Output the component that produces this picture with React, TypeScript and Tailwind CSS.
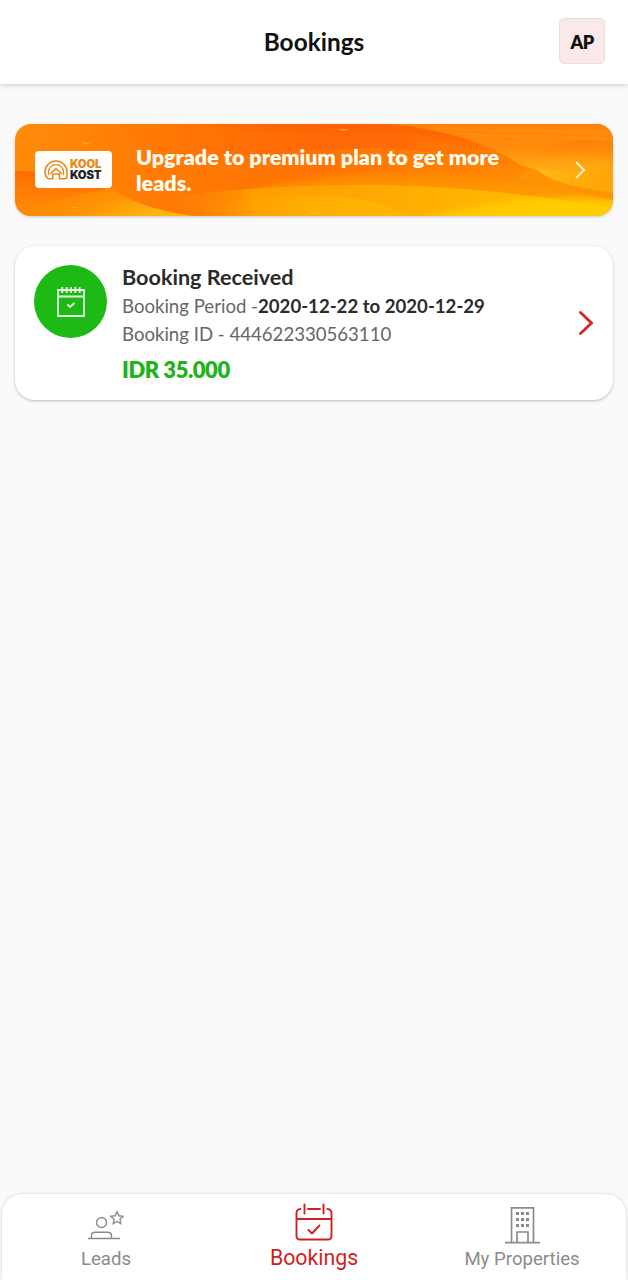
import type { ReactNode } from 'react'

function BannerArt() {
  return (
    <svg className="absolute inset-0 h-full w-full" viewBox="0 0 598 92" preserveAspectRatio="none" aria-hidden="true">
      <defs>
        <linearGradient id="base" x1="0" y1="0" x2="1" y2="0">
          <stop offset="0" stopColor="#ff8b08" />
          <stop offset="0.25" stopColor="#ff7a06" />
          <stop offset="0.5" stopColor="#ff7303" />
          <stop offset="0.75" stopColor="#ff8205" />
          <stop offset="1" stopColor="#ff9a08" />
        </linearGradient>
        <linearGradient id="top" x1="0" y1="0" x2="1" y2="0">
          <stop offset="0" stopColor="#ff7c05" />
          <stop offset="0.5" stopColor="#ff6806" />
          <stop offset="0.75" stopColor="#ff6c06" />
          <stop offset="1" stopColor="#ff8a05" />
        </linearGradient>
        <linearGradient id="ember" x1="0" y1="0" x2="0" y2="1">
          <stop offset="0" stopColor="#ff6a02" />
          <stop offset="1" stopColor="#ff7d02" stopOpacity="0" />
        </linearGradient>
        <linearGradient id="leftGlow" x1="0" y1="0" x2="1" y2="0.4">
          <stop offset="0" stopColor="#ff7a02" />
          <stop offset="0.6" stopColor="#ff9304" />
          <stop offset="1" stopColor="#ffb60c" />
        </linearGradient>
        <linearGradient id="middle" x1="0" y1="0" x2="0" y2="1">
          <stop offset="0" stopColor="#ff8e02" />
          <stop offset="1" stopColor="#ffab01" />
        </linearGradient>
        <linearGradient id="yellow" x1="0" y1="0" x2="1" y2="0">
          <stop offset="0" stopColor="#ff8a02" stopOpacity="0" />
          <stop offset="0.2" stopColor="#ffa002" />
          <stop offset="0.6" stopColor="#ffb402" />
          <stop offset="1" stopColor="#ffcc02" />
        </linearGradient>
        <linearGradient id="gold" x1="0" y1="0" x2="1" y2="0">
          <stop offset="0" stopColor="#ffa002" stopOpacity="0" />
          <stop offset="0.5" stopColor="#ffb002" />
          <stop offset="1" stopColor="#ffb802" />
        </linearGradient>
        <linearGradient id="corner" x1="0" y1="0" x2="0" y2="1">
          <stop offset="0" stopColor="#ff820a" />
          <stop offset="0.5" stopColor="#ff8c0b" />
          <stop offset="1" stopColor="#ffad14" />
        </linearGradient>
        <linearGradient id="shade" x1="0" y1="0" x2="0" y2="1">
          <stop offset="0" stopColor="#ff7d08" stopOpacity="0.8" />
          <stop offset="1" stopColor="#ff8a08" stopOpacity="0" />
        </linearGradient>
        <linearGradient id="lens" x1="0" y1="0" x2="1" y2="0.2">
          <stop offset="0" stopColor="#ffbd16" />
          <stop offset="0.6" stopColor="#ffac0c" />
          <stop offset="1" stopColor="#ffa608" />
        </linearGradient>
        <filter id="soft" x="-10%" y="-20%" width="120%" height="140%">
          <feGaussianBlur stdDeviation="3" />
        </filter>
      </defs>
      <rect width="598" height="92" fill="url(#base)" />
      <path d="M105 0C116 14 132 25 160 31C230 39 300 20 380 25C440 29 480 38 525 46C500 30 450 6 376 0Z" fill="url(#top)" />
      <path d="M180 -4C240 8 300 10 380 8C430 10 450 20 470 24C450 8 420 -2 376 -4Z" fill="#ff5f05" opacity=".55" filter="url(#soft)" />
      <path d="M0 47C50 49 80 47 95 64C118 79 140 86 178 92H0Z" fill="url(#ember)" />
      <path d="M0 92V84C30 80 60 71 95 64C118 79 140 86 178 92Z" fill="url(#leftGlow)" />
      <path d="M376 0C433 6 480 22 500 38C506 42 515 45 525 46C550 48 575 45 598 41V0Z" fill="url(#corner)" />
      <path d="M400 14C440 20 470 26 512 46C480 42 440 38 400 38Z" fill="#ff7c05" opacity=".6" filter="url(#soft)" />
      <path d="M520 34C532 17 560 14 598 18V38C570 30 545 32 520 34Z" fill="url(#shade)" />
      <path d="M420 4C480 8 540 6 598 9M440 9C500 15 550 12 598 15" stroke="#ffa31b" strokeWidth="1" fill="none" opacity=".45" />
      <path d="M230 68C280 54 340 47 393 49C450 50 518 58 598 76V100H240Z" fill="url(#middle)" opacity=".75" filter="url(#soft)" />
      <path d="M393 49C450 50 518 58 598 76V92H393Z" fill="url(#middle)" opacity=".4" filter="url(#soft)" />
      <path d="M150 74C220 64 300 60 376 61C450 63 530 72 598 84V92H178Z" fill="url(#yellow)" opacity=".85" />
      <path d="M190 82C240 72 315 70 343 75C368 80 382 86 393 92H190Z" fill="url(#gold)" opacity=".85" />
      <path d="M400 96C470 78 545 70 608 76V96Z" fill="#ffd002" opacity=".8" filter="url(#soft)" />
      <path d="M520 44C545 49 573 46 598 41V69C567 64 537 60 520 44Z" fill="url(#lens)" />
      <path d="M518 44C537 60 567 64 598 69V76C570 70 545 62 500 56Z" fill="#ff9304" />
      <path d="M66 18L76 19L70 20.5ZM322 5L334 5L329 7ZM293 87L306 89L296 90.5ZM56 83L62 83L60 84.5Z" fill="#ffb43b" opacity=".8" />
    </svg>
  )
}

function Logo() {
  return (
    <div className="mb-px flex h-[37px] w-[77px] shrink-0 items-center rounded-[4px] bg-[#fffefb] pl-[9px]">
      <svg className="h-5 w-6 shrink-0" viewBox="0 0 24 20" fill="none" stroke="#e58a22" strokeWidth="1.6" strokeLinecap="round" strokeLinejoin="round">
        <path d="M4 18.5C2 16.8 1 14.7 1 12.2C1 5.8 5.8 1 12 1S23 5.8 23 12.2V16.5C23 18 22 18.8 20.5 18.8H15.5V14H8.8V18.8H5" />
        <path d="M4.5 14.5V12C4.5 7.8 7.8 4.6 12 4.6S19.5 7.8 19.5 12V14.5" strokeWidth="1.3" />
        <path d="M6.5 13.5L12 8.6L17.5 13.5" />
      </svg>
      <div className="ml-[2px] font-['Inter',sans-serif] text-[11.3px] leading-[10.5px] font-black tracking-[-0.2px]">
        <div className="text-[#e58a22]">KOOL</div>
        <div className="text-[#20242a]">KOST</div>
      </div>
    </div>
  )
}

function CalendarIcon() {
  return (
    <svg className="h-8 w-7" viewBox="0 0 28 32" fill="none" stroke="#e8fbe6" strokeWidth="1.8">
      <path d="M1 4H27V30H1ZM1 10.5H27" />
      <path d="M5.3 1V7M9.7 1V7M14 1V7M18.3 1V7M22.7 1V7" />
      <path d="M10.5 18.5L13 21L17.5 17" />
    </svg>
  )
}

function NavItem({ label, active, children }: { label: string; active?: boolean; children: ReactNode }) {
  return (
    <button className={active ? 'flex w-[208px] flex-col items-center text-[#cf1f1f]' : 'flex w-[208px] flex-col items-center text-[#8b8b8b]'}>
      <span className="flex h-[42px] items-center">{children}</span>
      <span className={active ? 'mt-px text-[21.3px] leading-[26px]' : 'mt-[2px] text-[18.6px] leading-[26px]'}>{label}</span>
    </button>
  )
}

export default function App() {
  return (
    <div className="flex h-[1280px] w-[628px] flex-col overflow-hidden bg-[#fafafa] font-['Lato',sans-serif]">
      <header className="grid h-[84px] shrink-0 grid-cols-[1fr_auto_1fr] items-center bg-white shadow-[0_1px_5px_rgba(0,0,0,0.2)]">
        <span />
        <h1 className="text-[24.4px] font-bold text-[#111]">Bookings</h1>
        <div className="mr-[23px] mb-[2px] flex h-[46px] w-[46px] items-center justify-center justify-self-end rounded-[5px] border border-[#ecdcdc] bg-[#fbe8e8] pt-[2px] text-[18px] font-extrabold tracking-[-0.5px] text-[#111]">
          AP
        </div>
      </header>

      <main className="flex flex-1 flex-col gap-[30px] px-[15px] pt-10">
        <section className="relative h-[92px] overflow-hidden rounded-[16px] shadow-[0_1px_3px_rgba(0,0,0,0.2)]">
          <BannerArt />
          <div className="relative flex h-full items-center pr-[27px] pl-5">
            <Logo />
            <p className="ml-6 w-[400px] text-[21.5px] leading-[26px] font-extrabold text-[#fffdf2]">
              Upgrade to premium plan to get more leads.
            </p>
            <svg className="ml-auto h-5 w-3" viewBox="0 0 12 20" fill="none" stroke="#fff3d0" strokeWidth="1.9">
              <path d="M2 2L10 10L2 18" />
            </svg>
          </div>
        </section>

        <section className="flex h-[154px] rounded-[20px] bg-white pl-[19px] shadow-[0_1px_3px_rgba(0,0,0,0.25)]">
          <div className="mt-[19px] flex h-[73px] w-[73px] shrink-0 items-center justify-center rounded-full bg-[#1db914]">
            <CalendarIcon />
          </div>
          <div className="ml-[15px] pt-[17px] text-[18.6px] leading-[27px] text-[#666]">
            <h2 className="mb-[2px] text-[21.6px] leading-[28px] font-bold text-[#2b2b2b]">Booking Received</h2>
            <p>
              Booking Period -<span className="font-bold text-[#2b2b2b]">2020-12-22 to 2020-12-29</span>
            </p>
            <p className="mt-px">Booking ID - 444622330563110</p>
            <p className="mt-2 text-[22px] leading-[28px] font-extrabold tracking-[-0.45px] text-[#22b31a]">IDR 35.000</p>
          </div>
          <svg className="mt-[64px] mr-[19px] ml-auto h-[26px] w-4" viewBox="0 0 16 26" fill="none" stroke="#d02a2c" strokeWidth="2.9" strokeLinecap="round">
            <path d="M2.5 2.5L13.5 13L2.5 23.5" />
          </svg>
        </section>
      </main>

      <nav className="mx-[2px] flex h-[86px] shrink-0 justify-between rounded-t-[20px] bg-white pt-2 font-['Roboto',sans-serif] shadow-[0_0_3px_rgba(0,0,0,0.2)]">
        <NavItem label="Leads">
          <svg className="mt-[3px] h-[30px] w-9" viewBox="0 0 36 30" fill="none" stroke="currentColor" strokeWidth="1.4">
            <circle cx="13.5" cy="12.5" r="5" />
            <path d="M0 28.5H32M3.5 28.5V26C3.5 23.5 5 22.3 7.5 22.3H19.5C22 22.3 23.5 23.5 23.5 26V28.5" />
            <path d="M29 1.8L30.9 5.8L35.2 6.3L32 9.3L32.8 13.6L29 11.5L25.2 13.6L26 9.3L22.8 6.3L27.1 5.8Z" />
          </svg>
        </NavItem>
        <NavItem label="Bookings" active>
          <svg className="mb-[2px] h-[38px] w-[38px]" viewBox="0 0 38 38" fill="none" stroke="currentColor" strokeWidth="1.9" strokeLinecap="round" strokeLinejoin="round">
            <path d="M5.5 6C2.5 6 1.5 8 1.5 10V33C1.5 35.5 3 36.5 5 36.5H33C35.5 36.5 36.5 35 36.5 33V10C36.5 8 35.5 6 32.5 6M13 6H25M1.5 16H36.5M9.5 1.5V10.5M28.5 1.5V10.5" />
            <path d="M13.5 27L17 30.5L24.5 22.5" />
          </svg>
        </NavItem>
        <NavItem label="My Properties">
          <svg className="mt-[3px] h-[38px] w-[35px]" viewBox="0 0 35 38" fill="none" stroke="currentColor" strokeWidth="1.7">
            <path d="M0 36.7H35M6.5 36.7V1.8H28.5V36.7M12 36.7V26H23V36.7" />
            <path d="M11 7.5H14M16 7.5H19M21 7.5H24M11 13.5H14M16 13.5H19M21 13.5H24M11 19.5H14M16 19.5H19M21 19.5H24" strokeWidth="2.8" />
          </svg>
        </NavItem>
      </nav>
    </div>
  )
}
